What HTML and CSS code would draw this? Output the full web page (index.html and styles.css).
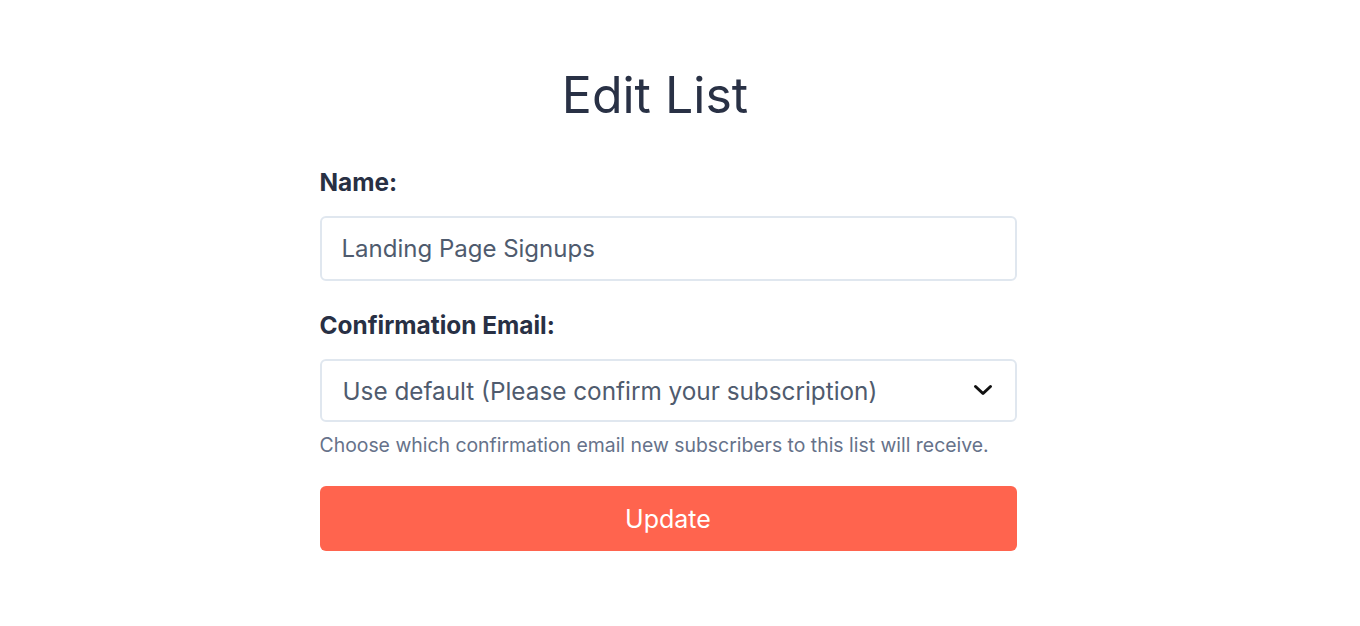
FILE: index.html
```html
<!DOCTYPE html>
<html lang="en">
<head>
    <meta charset="UTF-8">
    <meta name="viewport" content="width=device-width, initial-scale=1.0">
    <title>Edit List</title>
    <link rel="stylesheet" href="styles.css">
</head>
<body>
    <div class="page">
        <h1 class="title">Edit List</h1>

        <form class="list-form">
            <div class="field">
                <label for="name">Name:</label>
                <input type="text" id="name" class="text-input" value="Landing Page Signups">
            </div>

            <div class="field">
                <label for="confirmation">Confirmation Email:</label>
                <div class="select-wrap">
                    <select id="confirmation" class="select-input">
                        <option>Use default (Please confirm your subscription)</option>
                    </select>
                    <svg class="chevron" width="22" height="22" viewBox="0 0 22 22" aria-hidden="true">
                        <path d="M3.5 7.5l7.5 7 7.5-7" fill="none" stroke="#111" stroke-width="3" stroke-linecap="round" stroke-linejoin="round"/>
                    </svg>
                </div>
                <p class="help">Choose which confirmation email new subscribers to this list will receive.</p>
            </div>

            <button type="button" class="btn-update">Update</button>
        </form>
    </div>
</body>
</html>
```

FILE: styles.css
```css
* {
    margin: 0;
    padding: 0;
    box-sizing: border-box;
    font-family: Inter, "Open Sans", sans-serif;
}

body {
    background: #fff;
    color: #2a3347;
}

.page {
    width: 721px;
    margin: 0 auto;
    padding: 62px 24px 0 0;
}

.title {
    font-size: 50px;
    font-weight: 400;
    text-align: center;
    color: #293145;
    line-height: 66px;
    margin-left: -26px;
}

.list-form {
    margin-top: 40px;
}

.field {
    margin-bottom: 30px;
}

.field label {
    display: block;
    font-size: 24.4px;
    font-weight: 700;
    color: #283044;
    line-height: 28px;
    margin-bottom: 20px;
}

.text-input,
.select-input {
    width: 100%;
    height: 65px;
    border: 2px solid #e0e7ef;
    border-radius: 6px;
    padding: 0 20px;
    font-size: 24px;
    color: #4f5b6e;
    background: #fff;
    outline: none;
}

.select-wrap {
    position: relative;
}

.select-input {
    height: 63px;
    appearance: none;
    -webkit-appearance: none;
    padding-left: 21px;
    font-size: 24.3px;
}

.chevron {
    position: absolute;
    right: 23px;
    top: 20px;
    pointer-events: none;
}

.help {
    margin-top: 10px;
    font-size: 19.4px;
    color: #66728a;
    line-height: 26px;
}

.btn-update {
    display: block;
    width: 100%;
    height: 65px;
    margin-top: -2px;
    border: none;
    border-radius: 6px;
    background: #ff644e;
    color: #fff;
    font-size: 25px;
    cursor: pointer;
}
```
